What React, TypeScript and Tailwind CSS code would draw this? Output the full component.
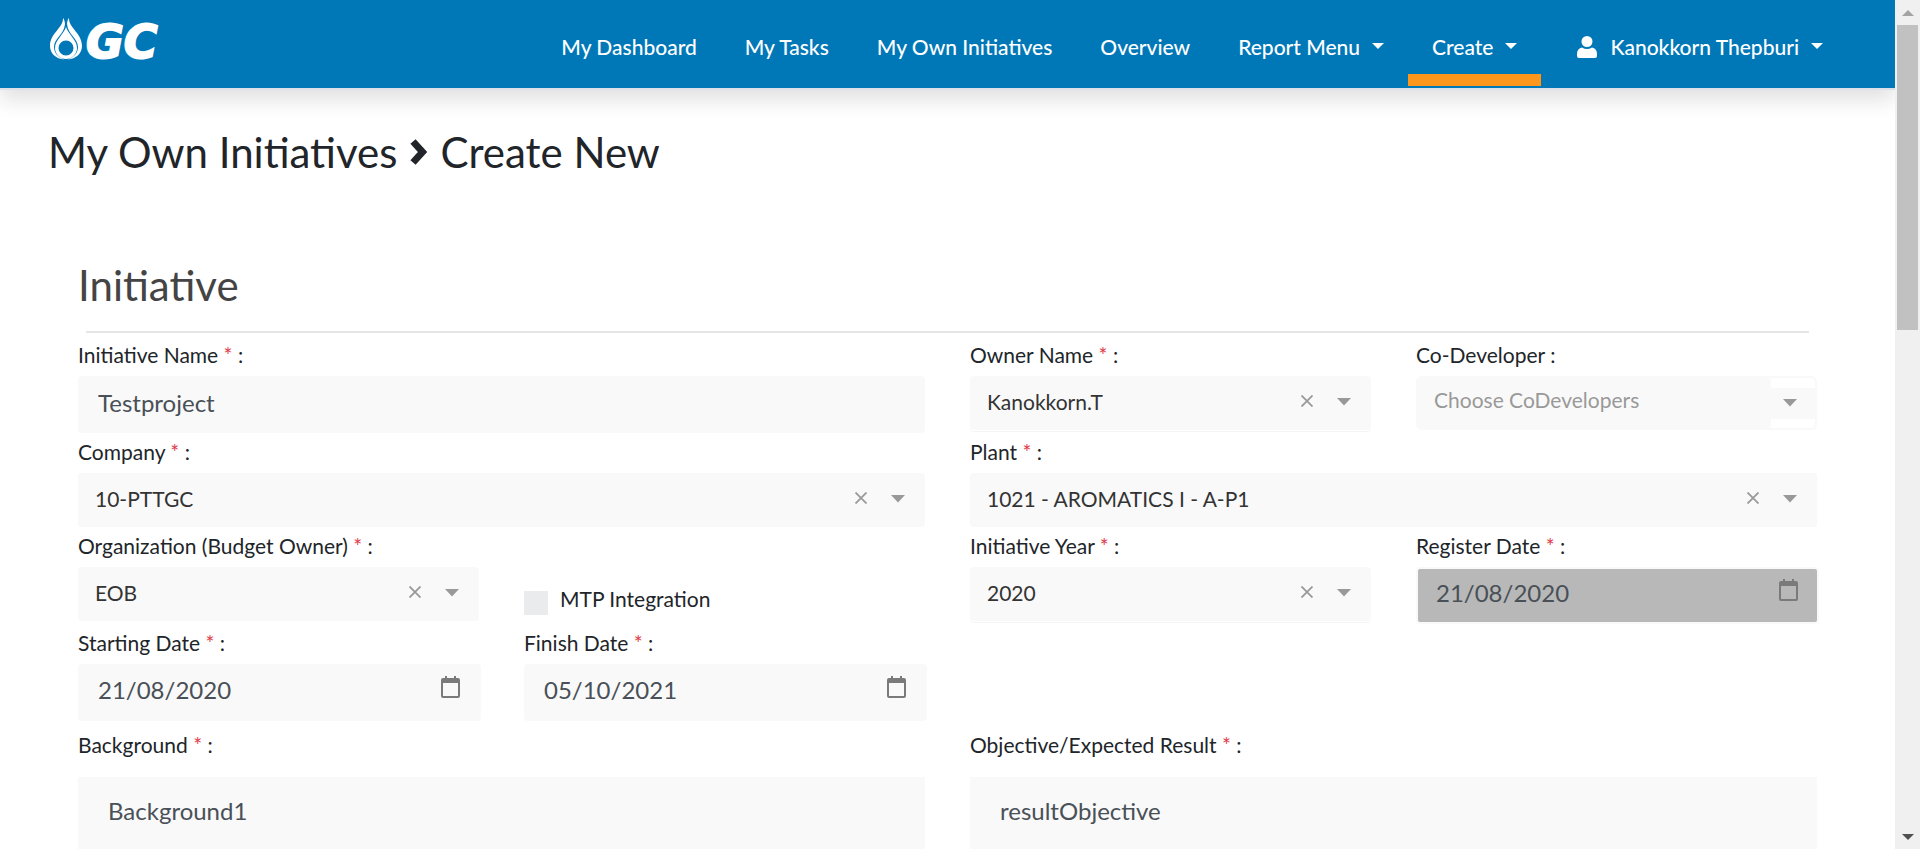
import { useState } from "react";
import type { ReactNode } from "react";

function Logo() {
  return (
    <div className="flex items-start">
      <svg width="36" height="46" viewBox="0 0 36 46" aria-hidden="true">
        <g fill="#fff">
          <path d="M15 2C15.500 12 2 17 2 30C2 37 7.500 43 16.500 43.500C9 41 6 36 6 31C6 22 16 19 17 8C16.800 5 16 3 15 2Z" />
          <path d="M21 2C20.500 12 34 17 34 30C34 37 28.500 43 19.500 43.500C27 41 30 36 30 31C30 22 20 19 19 8C19.200 5 20 3 21 2Z" />
          <path
            fillRule="evenodd"
            d="M18 11C20 18 29 24 29 32A11 11 0 0 1 7 32C7 24 16 18 18 11ZM18 24.500A7.500 7.500 0 1 0 18 39.500A7.500 7.500 0 1 0 18 24.500Z"
          />
        </g>
      </svg>
      <span className="pl-0.5 font-['DejaVu_Sans'] text-[46px] leading-[52px] font-bold italic [-webkit-text-stroke:2px_white]">GC</span>
    </div>
  );
}

function Caret() {
  return (
    <svg width="12" height="6" viewBox="0 0 12 6" className="mb-[3px]" aria-hidden="true">
      <path d="M0 0H12L6 6Z" fill="currentColor" />
    </svg>
  );
}

function NavItem({ active, children }: { active?: boolean; children: ReactNode }) {
  return (
    <a
      href="#"
      className={
        "flex h-[86px] items-center gap-3 whitespace-nowrap border-b-12 px-6 pt-5 " +
        (active ? "border-[#ff961c]" : "border-transparent")
      }
    >
      {children}
    </a>
  );
}

function Header() {
  return (
    <header className="flex items-start justify-between border-b-2 border-[#dce0e8] bg-[#0078b8] pb-[2px] pl-12 pr-12 text-[21px] font-medium text-white shadow-[0_10px_20px_rgba(0,0,0,0.12)]">
      <a href="#" className="pt-4">
        <Logo />
      </a>
      <nav className="flex">
        <NavItem>My Dashboard</NavItem>
        <NavItem>My Tasks</NavItem>
        <NavItem>My Own Initiatives</NavItem>
        <NavItem>Overview</NavItem>
        <NavItem>
          Report Menu <Caret />
        </NavItem>
        <NavItem active>
          Create <Caret />
        </NavItem>
        <div className="pl-3">
          <NavItem>
            <svg width="20" height="22" viewBox="0 0 20 22" className="mr-px" aria-hidden="true">
              <ellipse cx="10" cy="5.500" rx="5.500" ry="5.500" fill="#fff" />
              <path d="M5 11.500Q10 14.500 15 11.500Q20 12.500 20 18V20Q20 22 18 22H2Q0 22 0 20V18Q0 12.500 5 11.500Z" fill="#fff" />
            </svg>
            Kanokkorn Thepburi <Caret />
          </NavItem>
        </div>
      </nav>
    </header>
  );
}

function FieldLabel({ id, required, children }: { id: string; required?: boolean; children: ReactNode }) {
  return (
    <label htmlFor={id} className="block h-10 whitespace-pre pt-1 text-[21px] leading-[30px]">
      {children}
      {required && <span className="text-[#e03c4c]"> *</span>}
      <span> :</span>
    </label>
  );
}

function Arrow() {
  return (
    <svg width="14" height="8" viewBox="0 0 14 8" className="pointer-events-none shrink-0" aria-hidden="true">
      <path d="M0 0H14L7 7.500Z" fill="#999" />
    </svg>
  );
}

type SelectProps = { id: string; label: string; value: string; wide?: boolean; underlined?: boolean };

function SelectField({ id, label, value, wide, underlined }: SelectProps) {
  const [current, setCurrent] = useState(value);
  return (
    <div className={wide ? "col-span-2" : ""}>
      <FieldLabel id={id} required>
        {label}
      </FieldLabel>
      <div
        className={
          "flex h-[54px] items-center rounded-sm bg-[#f9f9f9] pr-5 pb-0.5 " +
          (underlined ? "shadow-[0_1px_0_#fff,0_2px_0_#f5f5f5]" : "")
        }
      >
        <select
          id={id}
          value={current}
          onChange={(e) => setCurrent(e.target.value)}
          className="h-full min-w-0 flex-1 appearance-none bg-transparent pl-[17px] text-[21px] text-[#333] outline-none"
        >
          <option value=""></option>
          <option value={value}>{value}</option>
        </select>
        <button type="button" aria-label={"Clear " + label} onClick={() => setCurrent("")} className="mr-6 pb-0.5">
          <svg width="12" height="12" viewBox="0 0 12 12">
            <path d="M0.500 0.500L11.500 11.500M11.500 0.500L0.500 11.500" stroke="#999" strokeWidth="1.800" />
          </svg>
        </button>
        <Arrow />
      </div>
    </div>
  );
}

function DateField({ id, label, value, disabled }: { id: string; label: string; value: string; disabled?: boolean }) {
  return (
    <div>
      <FieldLabel id={id} required>
        {label}
      </FieldLabel>
      <div
        className={
          "-mr-0.5 flex h-[57px] items-center rounded-sm border-2 border-[#f9f9f9] pr-[19px] pb-1 text-[#495057] " +
          (disabled ? "bg-[#b8b8b8]" : "bg-[#f9f9f9]")
        }
      >
        <input
          id={id}
          type="text"
          defaultValue={value}
          disabled={disabled}
          className="h-full min-w-0 flex-1 bg-transparent pb-0.5 pl-[18px] text-[24px] outline-none"
        />
        <svg width="19" height="22" viewBox="0 0 19 22" className="mb-2 shrink-0" aria-hidden="true">
          <path
            fillRule="evenodd"
            fill="#7a7a7a"
            d="M4 0H6V2H13V0H15V2H17Q19 2 19 4V20Q19 22 17 22H2Q0 22 0 20V4Q0 2 2 2H4ZM2 7V20H17V7Z"
          />
        </svg>
      </div>
    </div>
  );
}

function TextAreaField({ id, label, value }: { id: string; label: string; value: string }) {
  return (
    <div className="col-span-2 pt-[5px]">
      <FieldLabel id={id} required>
        {label}
      </FieldLabel>
      <textarea
        id={id}
        defaultValue={value}
        rows={5}
        className="mt-[11px] block w-full resize-none bg-[#f9f9f9] px-[30px] py-[18px] text-[24px] leading-8 text-[#495057] outline-none"
      />
    </div>
  );
}

function Scrollbar() {
  return (
    <div className="flex w-[25px] shrink-0 flex-col items-center bg-[#f0f0f0]" aria-hidden="true">
      <div className="flex h-[25px] items-center">
        <svg width="12" height="6" viewBox="0 0 12 6">
          <path d="M0 6H12L6 0Z" fill="#a3a3a3" />
        </svg>
      </div>
      <div className="h-[305px] w-[21px] bg-[#c1c1c1]" />
      <div className="mt-auto flex h-[25px] items-center">
        <svg width="12" height="6" viewBox="0 0 12 6">
          <path d="M0 0H12L6 6Z" fill="#505050" />
        </svg>
      </div>
    </div>
  );
}

export default function App() {
  return (
    <div className="flex h-screen overflow-hidden bg-white font-['Lato','Carlito',sans-serif] text-[#212529]">
      <div className="min-w-0 flex-1 overflow-hidden">
        <Header />
        <main>
          <h1 className="flex items-center gap-3 px-12 pt-9 text-[42px] leading-[52px]">
            My Own Initiatives
            <svg width="19" height="28" viewBox="0 0 19 28" aria-hidden="true">
              <path d="M4 3.500L13.500 14L4 24.500" fill="none" stroke="currentColor" strokeWidth="7" />
            </svg>
            Create New
          </h1>
          <form className="px-[78px] pt-[77px]">
            <h2 className="h-[76px] text-[42px] leading-[60px] text-[#444]">Initiative</h2>
            <hr className="mx-2 border-t-2 border-[#e5e5e5]" />
            <div className="grid grid-cols-4 items-start gap-x-[45px] pt-[3px]">
              <div className="col-span-2">
                <FieldLabel id="name" required>
                  Initiative Name
                </FieldLabel>
                <input
                  id="name"
                  type="text"
                  defaultValue="Testproject"
                  className="block h-[57px] w-full rounded-sm bg-[#f9f9f9] px-5 pb-1 text-[24px] text-[#495057] outline-none"
                />
              </div>
              <SelectField id="owner" label="Owner Name" value="Kanokkorn.T" underlined />
              <div>
                <FieldLabel id="codev">Co-Developer</FieldLabel>
                <div className="flex h-[54px] items-center rounded-md border-2 border-[#f9f9f9]">
                  <input
                    id="codev"
                    type="text"
                    placeholder="Choose CoDevelopers"
                    className="h-full min-w-0 flex-1 rounded-sm bg-[#f9f9f9] px-4 pb-2 text-[21px] outline-none placeholder:text-[#999]"
                  />
                  <button type="button" aria-label="Show co-developers" className="flex h-[31px] w-[44px] items-center justify-end bg-[#f9f9f9] pr-[18px]">
                    <Arrow />
                  </button>
                </div>
              </div>

              <SelectField id="company" label="Company" value="10-PTTGC" wide />
              <SelectField id="plant" label="Plant" value="1021 - AROMATICS I - A-P1" wide />

              <SelectField id="org" label="Organization (Budget Owner)" value="EOB" />
              <div className="flex items-start gap-3 pt-[57px]">
                <input id="mtp" type="checkbox" className="mt-[7px] size-6 appearance-none bg-[#e9ebed] checked:bg-[#0078b8]" />
                <label htmlFor="mtp" className="text-[21px] leading-[30px]">
                  MTP Integration
                </label>
              </div>
              <SelectField id="year" label="Initiative Year" value="2020" underlined />
              <DateField id="register" label="Register Date" value="21/08/2020" disabled />

              <DateField id="start" label="Starting Date" value="21/08/2020" />
              <DateField id="finish" label="Finish Date" value="05/10/2021" />
              <div className="col-span-2" />

              <TextAreaField id="background" label="Background" value="Background1" />
              <TextAreaField id="objective" label="Objective/Expected Result" value="resultObjective" />
            </div>
          </form>
        </main>
      </div>
      <Scrollbar />
    </div>
  );
}
